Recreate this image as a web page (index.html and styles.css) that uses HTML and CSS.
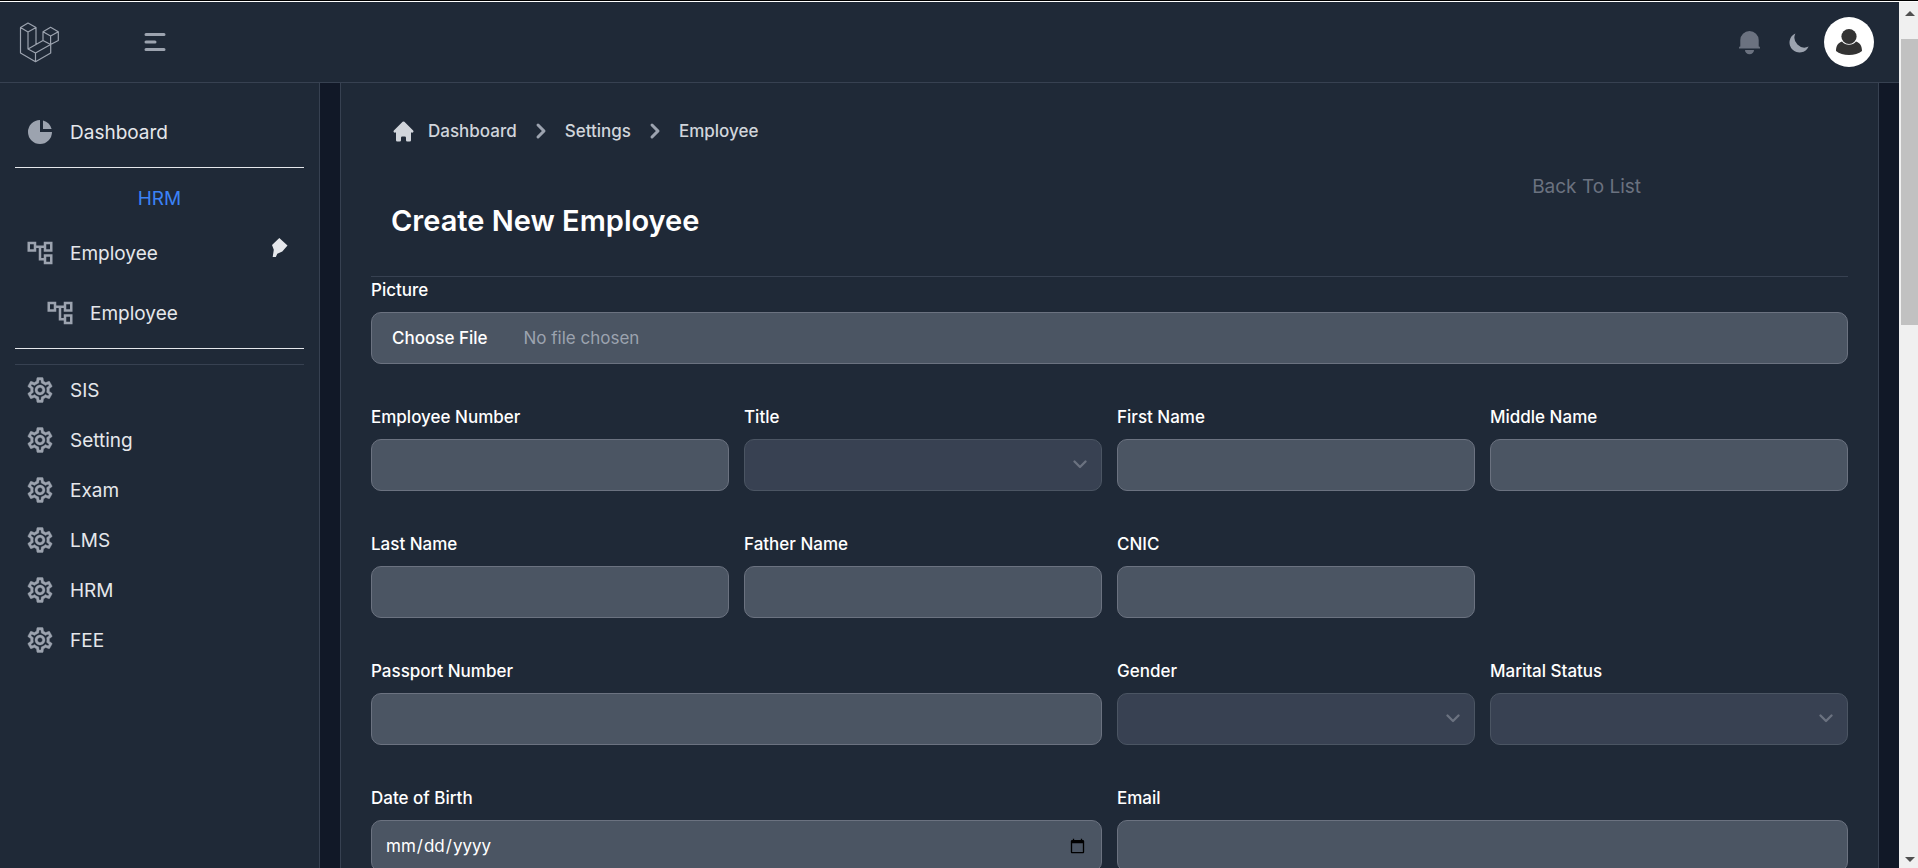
FILE: index.html
```html
<!DOCTYPE html>
<html lang="en">
<head>
<meta charset="utf-8">
<meta name="viewport" content="width=device-width, initial-scale=1">
<title>Create New Employee</title>
<link rel="stylesheet" href="styles.css">
</head>
<body>
<svg class="sprite" aria-hidden="true">
  <symbol id="i-tree" viewBox="0 0 24 24"><path d="M22 11V3h-7v3H9V3H2v8h7V8h2v10h4v3h7v-8h-7v3h-2V8h2v3h7zM7 9H4V5h3v4zm10 6h3v4h-3v-4zm0-10h3v4h-3V5z"/></symbol>
  <symbol id="i-gear" viewBox="0 0 24 24"><path stroke="currentColor" stroke-width=".3" d="M19.43 12.98c.04-.32.07-.64.07-.98s-.03-.66-.07-.98l2.11-1.65c.19-.15.24-.42.12-.64l-2-3.46c-.09-.16-.26-.25-.44-.25-.06 0-.12.01-.17.03l-2.49 1c-.52-.4-1.08-.73-1.69-.98l-.38-2.65C14.46 2.18 14.25 2 14 2h-4c-.25 0-.46.18-.49.42l-.38 2.65c-.61.25-1.17.59-1.69.98l-2.49-1c-.06-.02-.12-.03-.18-.03-.17 0-.34.09-.43.25l-2 3.46c-.13.22-.07.49.12.64l2.11 1.65c-.04.32-.07.65-.07.98s.03.66.07.98l-2.11 1.65c-.19.15-.24.42-.12.64l2 3.46c.09.16.26.25.44.25.06 0 .12-.01.17-.03l2.49-1c.52.4 1.08.73 1.69.98l.38 2.65c.03.24.24.42.49.42h4c.25 0 .46-.18.49-.42l.38-2.65c.61-.25 1.17-.59 1.69-.98l2.49 1c.06.02.12.03.18.03.17 0 .34-.09.43-.25l2-3.46c.12-.22.07-.49-.12-.64l-2.11-1.65zm-1.98-1.71c.04.31.05.52.05.73 0 .21-.02.43-.05.73l-.14 1.13.89.7 1.08.84-.7 1.21-1.27-.51-1.04-.42-.9.68c-.43.32-.84.56-1.25.73l-1.06.43-.16 1.13-.2 1.35h-1.4l-.19-1.35-.16-1.13-1.06-.43c-.43-.18-.83-.41-1.23-.71l-.91-.7-1.06.43-1.27.51-.7-1.21 1.08-.84.89-.7-.14-1.13c-.03-.31-.05-.54-.05-.74s.02-.43.05-.73l.14-1.13-.89-.7-1.08-.84.7-1.21 1.27.51 1.04.42.9-.68c.43-.32.84-.56 1.25-.73l1.06-.43.16-1.13.2-1.35h1.39l.19 1.35.16 1.13 1.06.43c.43.18.83.41 1.23.71l.91.7 1.06-.43 1.27-.51.7 1.21-1.07.85-.89.7.14 1.13zM12 8c-2.21 0-4 1.79-4 4s1.79 4 4 4 4-1.79 4-4-1.79-4-4-4zm0 6c-1.1 0-2-.9-2-2s.9-2 2-2 2 .9 2 2-.9 2-2 2z"/></symbol>
  <symbol id="i-right" viewBox="0 0 20 20"><path d="M7.293 14.707a1 1 0 010-1.414L10.586 10 7.293 6.707a1 1 0 011.414-1.414l4 4a1 1 0 010 1.414l-4 4a1 1 0 01-1.414 0z"/></symbol>
  <symbol id="i-down" viewBox="0 0 14 9"><path fill="none" stroke="currentColor" stroke-width="2.300" stroke-linecap="round" stroke-linejoin="round" d="M1.500 1.500 7 7l5.500-5.500"/></symbol>
</svg>
<div class="window">
  <div class="app">
    <header class="topbar">
      <div class="topbar-left">
        <a class="logo-link" href="#" aria-label="Home">
          <svg class="logo" viewBox="19 22 41 41"><path d="M28 23l8 4.500-8 4.500-7.500-4.500zM20.500 27.500V53l15 8.700L50.700 53v-8.500M28 32v17l7.500 4v8.700M36 27.500v17M28 49l15-8.500M50.600 27.300l7.700 4.400-7.700 4.300-7.600-4.300zM43 31.700v8.800l7.600 4 7.700-4v-8.800M50.600 36v8.500L35.500 53"/></svg>
        </a>
        <button class="icon-btn" type="button" aria-label="Toggle sidebar">
          <svg class="icon" viewBox="0 0 20 20"><path d="M3 5a1 1 0 011-1h12a1 1 0 110 2H4a1 1 0 01-1-1zM3 10a1 1 0 011-1h6a1 1 0 110 2H4a1 1 0 01-1-1zM3 15a1 1 0 011-1h12a1 1 0 110 2H4a1 1 0 01-1-1z"/></svg>
        </button>
      </div>
      <div class="topbar-right">
        <button class="icon-btn bell" type="button" aria-label="Notifications">
          <svg class="icon-sm" viewBox="0 0 25 25"><path d="M3.300 16.500V10A9.200 9 0 0 1 21.700 10v6.500a1.200 1.200 0 0 1 1.300 1.200v.8H2v-.8a1.200 1.200 0 0 1 1.300-1.200zM8 20h9a4.500 4.300 0 0 1-9 0z"/></svg>
        </button>
        <button class="icon-btn" type="button" aria-label="Dark mode">
          <svg class="icon-sm" viewBox="0 0 20 20"><path d="M17.293 13.293A8 8 0 016.707 2.707a8.001 8.001 0 1010.586 10.586z"/></svg>
        </button>
        <button class="avatar" type="button" aria-label="User menu">
          <svg class="avatar-img" viewBox="0 0 50 50"><circle cx="25" cy="19.500" r="7.600"/><path d="M18 24.500a9.200 9.200 0 0 0 14 0c3.500 1 6 4 6 9.500-3 2.600-8 4-13 4s-10-1.400-13-4c0-5.500 2.500-8.500 6-9.500z"/></svg>
        </button>
      </div>
    </header>
    <div class="body">
      <nav class="sidebar" aria-label="Main">
        <a class="nav-item" href="#"><svg class="icon" viewBox="0 0 20 20"><path d="M2 10a8 8 0 018-8v8h8a8 8 0 11-16 0z"/><path d="M12 2.252A8.014 8.014 0 0117.748 8H12V2.252z"/></svg><span class="nav-text">Dashboard</span></a>
        <section class="nav-group">
          <h2 class="group-title">HRM</h2>
          <a class="nav-item" href="#"><svg class="icon"><use href="#i-tree"/></svg><span class="nav-text">Employee</span><svg class="pin" viewBox="0 0 16 20"><path d="M7.300 0l8.200 7.500-5.200 6-5 2.300-1.500 3.200H.7l1.100-7.200L0 7z"/></svg></a>
          <a class="nav-item nav-sub" href="#"><svg class="icon"><use href="#i-tree"/></svg><span class="nav-text">Employee</span></a>
        </section>
        <div class="nav-list">
          <a class="nav-item" href="#"><svg class="icon"><use href="#i-gear"/></svg><span class="nav-text">SIS</span></a>
          <a class="nav-item" href="#"><svg class="icon"><use href="#i-gear"/></svg><span class="nav-text">Setting</span></a>
          <a class="nav-item" href="#"><svg class="icon"><use href="#i-gear"/></svg><span class="nav-text">Exam</span></a>
          <a class="nav-item" href="#"><svg class="icon"><use href="#i-gear"/></svg><span class="nav-text">LMS</span></a>
          <a class="nav-item" href="#"><svg class="icon"><use href="#i-gear"/></svg><span class="nav-text">HRM</span></a>
          <a class="nav-item" href="#"><svg class="icon"><use href="#i-gear"/></svg><span class="nav-text">FEE</span></a>
        </div>
      </nav>
      <main class="card">
        <nav class="crumbs" aria-label="Breadcrumb">
          <a class="crumb crumb-home" href="#"><svg class="icon-sm" viewBox="0 0 20 20"><path d="M10.707 2.293a1 1 0 00-1.414 0l-7 7a1 1 0 001.414 1.414L4 10.414V17a1 1 0 001 1h2a1 1 0 001-1v-2a1 1 0 011-1h2a1 1 0 011 1v2a1 1 0 001 1h2a1 1 0 001-1v-6.586l.293.293a1 1 0 001.414-1.414l-7-7z"/></svg>Dashboard</a>
          <svg class="icon"><use href="#i-right"/></svg>
          <a class="crumb" href="#">Settings</a>
          <svg class="icon"><use href="#i-right"/></svg>
          <a class="crumb" href="#">Employee</a>
        </nav>
        <div class="heading">
          <h1 class="title">Create New Employee</h1>
          <a class="back" href="#">Back To List</a>
        </div>
        <form class="form">
          <div class="field span-4"><label for="picture">Picture</label><input class="control file" id="picture" type="file"></div>
          <div class="field"><label for="number">Employee Number</label><input class="control" id="number" type="text"></div>
          <div class="field"><label for="title">Title</label><div class="select-box"><select class="control select" id="title"></select><svg class="caret"><use href="#i-down"/></svg></div></div>
          <div class="field"><label for="first">First Name</label><input class="control" id="first" type="text"></div>
          <div class="field"><label for="middle">Middle Name</label><input class="control" id="middle" type="text"></div>
          <div class="field"><label for="last">Last Name</label><input class="control" id="last" type="text"></div>
          <div class="field"><label for="father">Father Name</label><input class="control" id="father" type="text"></div>
          <div class="field"><label for="cnic">CNIC</label><input class="control" id="cnic" type="text"></div>
          <div class="field span-2 new-row"><label for="passport">Passport Number</label><input class="control" id="passport" type="text"></div>
          <div class="field"><label for="gender">Gender</label><div class="select-box"><select class="control select" id="gender"></select><svg class="caret"><use href="#i-down"/></svg></div></div>
          <div class="field"><label for="marital">Marital Status</label><div class="select-box"><select class="control select" id="marital"></select><svg class="caret"><use href="#i-down"/></svg></div></div>
          <div class="field span-2"><label for="dob">Date of Birth</label><input class="control" id="dob" type="date"></div>
          <div class="field span-2"><label for="email">Email</label><input class="control" id="email" type="email"></div>
        </form>
      </main>
    </div>
  </div>
  <div class="scrollbar" aria-hidden="true">
    <svg class="arrow" viewBox="0 0 10 5"><path d="M0 5 5 0l5 5z"/></svg>
    <div class="track"><div class="thumb"></div></div>
    <svg class="arrow" viewBox="0 0 10 5"><path d="M0 0h10L5 5z"/></svg>
  </div>
</div>
</body>
</html>
```
FILE: styles.css
```css
:root {
  --gray-900: #111827;
  --gray-800: #1f2937;
  --gray-700: #374151;
  --gray-600: #4b5563;
  --gray-500: #6b7280;
  --gray-400: #9ca3af;
  --gray-300: #d1d5db;
  --gray-200: #e5e7eb;
}

* { box-sizing: border-box; }

body {
  margin: 0;
  background: var(--gray-900);
  color: #fff;
  font: 400 19px/30px Inter, "Liberation Sans", sans-serif;
  color-scheme: light;
}

a { color: inherit; text-decoration: none; }
h1, h2 { margin: 0; }
svg { display: block; flex: none; fill: currentColor; }
button { border: 0; padding: 0; background: none; cursor: pointer; }

.sprite { position: absolute; width: 0; height: 0; }
.icon { width: 30px; height: 30px; color: var(--gray-400); }
.icon-sm { width: 25px; height: 25px; }

.window {
  display: flex;
  height: 100vh;
  overflow: hidden;
  border-top: 1px solid #000;
  box-shadow: inset 0 1px #fff;
  padding-top: 1px;
}
.app { flex: 1; min-width: 0; display: flex; flex-direction: column; }

.topbar {
  flex: none;
  display: flex;
  justify-content: space-between;
  align-items: center;
  padding: 15px 25px 15px 19px;
  background: var(--gray-800);
  border-bottom: 1px solid var(--gray-700);
}
.topbar-left { display: flex; align-items: center; gap: 80px; }
.topbar-right { display: flex; align-items: center; gap: 12px; }
.logo { width: 41px; height: 41px; fill: none; stroke: var(--gray-400); stroke-width: 1.2; stroke-linejoin: round; }
.icon-btn { color: var(--gray-400); }
.bell { color: var(--gray-500); margin-right: 13px; }
.avatar { width: 50px; height: 50px; border-radius: 50%; background: #fff; color: #333; }
.avatar-img { width: 50px; height: 50px; }

.body { flex: 1; min-height: 0; display: flex; }

.sidebar {
  flex: none;
  width: 320px;
  padding: 24px 15px;
  background: var(--gray-800);
  border-right: 1px solid var(--gray-700);
  color: var(--gray-200);
}
.nav-item { display: flex; align-items: center; gap: 15px; height: 50px; padding: 0 16px 0 10px; }
.nav-text { padding-top: 2px; }
.nav-group {
  margin: 10px 0 15px;
  padding: 16px 0 5px;
  border: solid var(--gray-200);
  border-width: 1px 0;
}
.group-title { font-size: 19px; font-weight: 400; color: #3b82f6; text-align: center; }
.nav-group .nav-item { height: 60px; }
.group-title + .nav-item { margin-top: 9px; }
.nav-sub { padding-left: 30px; }
.pin { width: 16px; height: 20px; margin-left: auto; margin-bottom: 10px; }
.nav-list { border-top: 1px solid var(--gray-700); }

.card {
  flex: 1;
  min-width: 0;
  margin: 0 20px;
  padding: 33px 30px 0;
  background: var(--gray-800);
  border: solid var(--gray-700);
  border-width: 0 1px;
}
.crumbs { display: flex; align-items: center; gap: 13px; padding-left: 20px; color: var(--gray-300); font-size: 17px; font-weight: 500; }
.crumbs .icon { margin: 0 -4px; }
.crumb-home { display: flex; align-items: center; gap: 12px; }
.heading {
  display: flex;
  justify-content: space-between;
  align-items: flex-start;
  margin-top: 26px;
  padding: 0 207px 33px 20px;
  border-bottom: 1px solid var(--gray-700);
}
.title { margin-top: 26px; font-size: 29px; line-height: 45px; font-weight: 600; }
.back { color: var(--gray-500); }

.form { display: grid; grid-template-columns: repeat(4, minmax(0, 1fr)); gap: 40px 15px; }
.field { display: flex; flex-direction: column; gap: 8px; font-size: 17px; line-height: 27px; font-weight: 500; }
.span-2 { grid-column: span 2; }
.span-4 { grid-column: span 4; }
.new-row { grid-column: 1 / span 2; }
.control {
  width: 100%;
  height: 52px;
  padding: 0 13px;
  border: 1px solid var(--gray-500);
  border-radius: 10px;
  background: var(--gray-600);
  color: #fff;
  font: 400 17px/25px Inter, "Liberation Sans", sans-serif;
}
.file { padding: 0; color: var(--gray-400); line-height: 50px; }
.file::file-selector-button {
  height: 50px;
  margin: 0 16px 0 0;
  padding: 0 20px;
  border: 0;
  background: transparent;
  color: #fff;
  font: 500 17px/50px Inter, "Liberation Sans", sans-serif;
}
.select-box { position: relative; }
.select { display: block; appearance: none; background: #384152; border-color: var(--gray-600); }
.caret { position: absolute; top: 21px; right: 15px; width: 14px; height: 9px; color: var(--gray-500); pointer-events: none; }

.scrollbar {
  flex: none;
  display: flex;
  flex-direction: column;
  align-items: center;
  width: 19px;
  padding: 9px 0 6px 2px;
  background: #f0f0f0;
  color: #505050;
}
.arrow { width: 10px; height: 5px; }
.track { flex: 1; width: 100%; padding: 23px 0; }
.thumb { height: 36%; background: #c1c1c1; }
```
